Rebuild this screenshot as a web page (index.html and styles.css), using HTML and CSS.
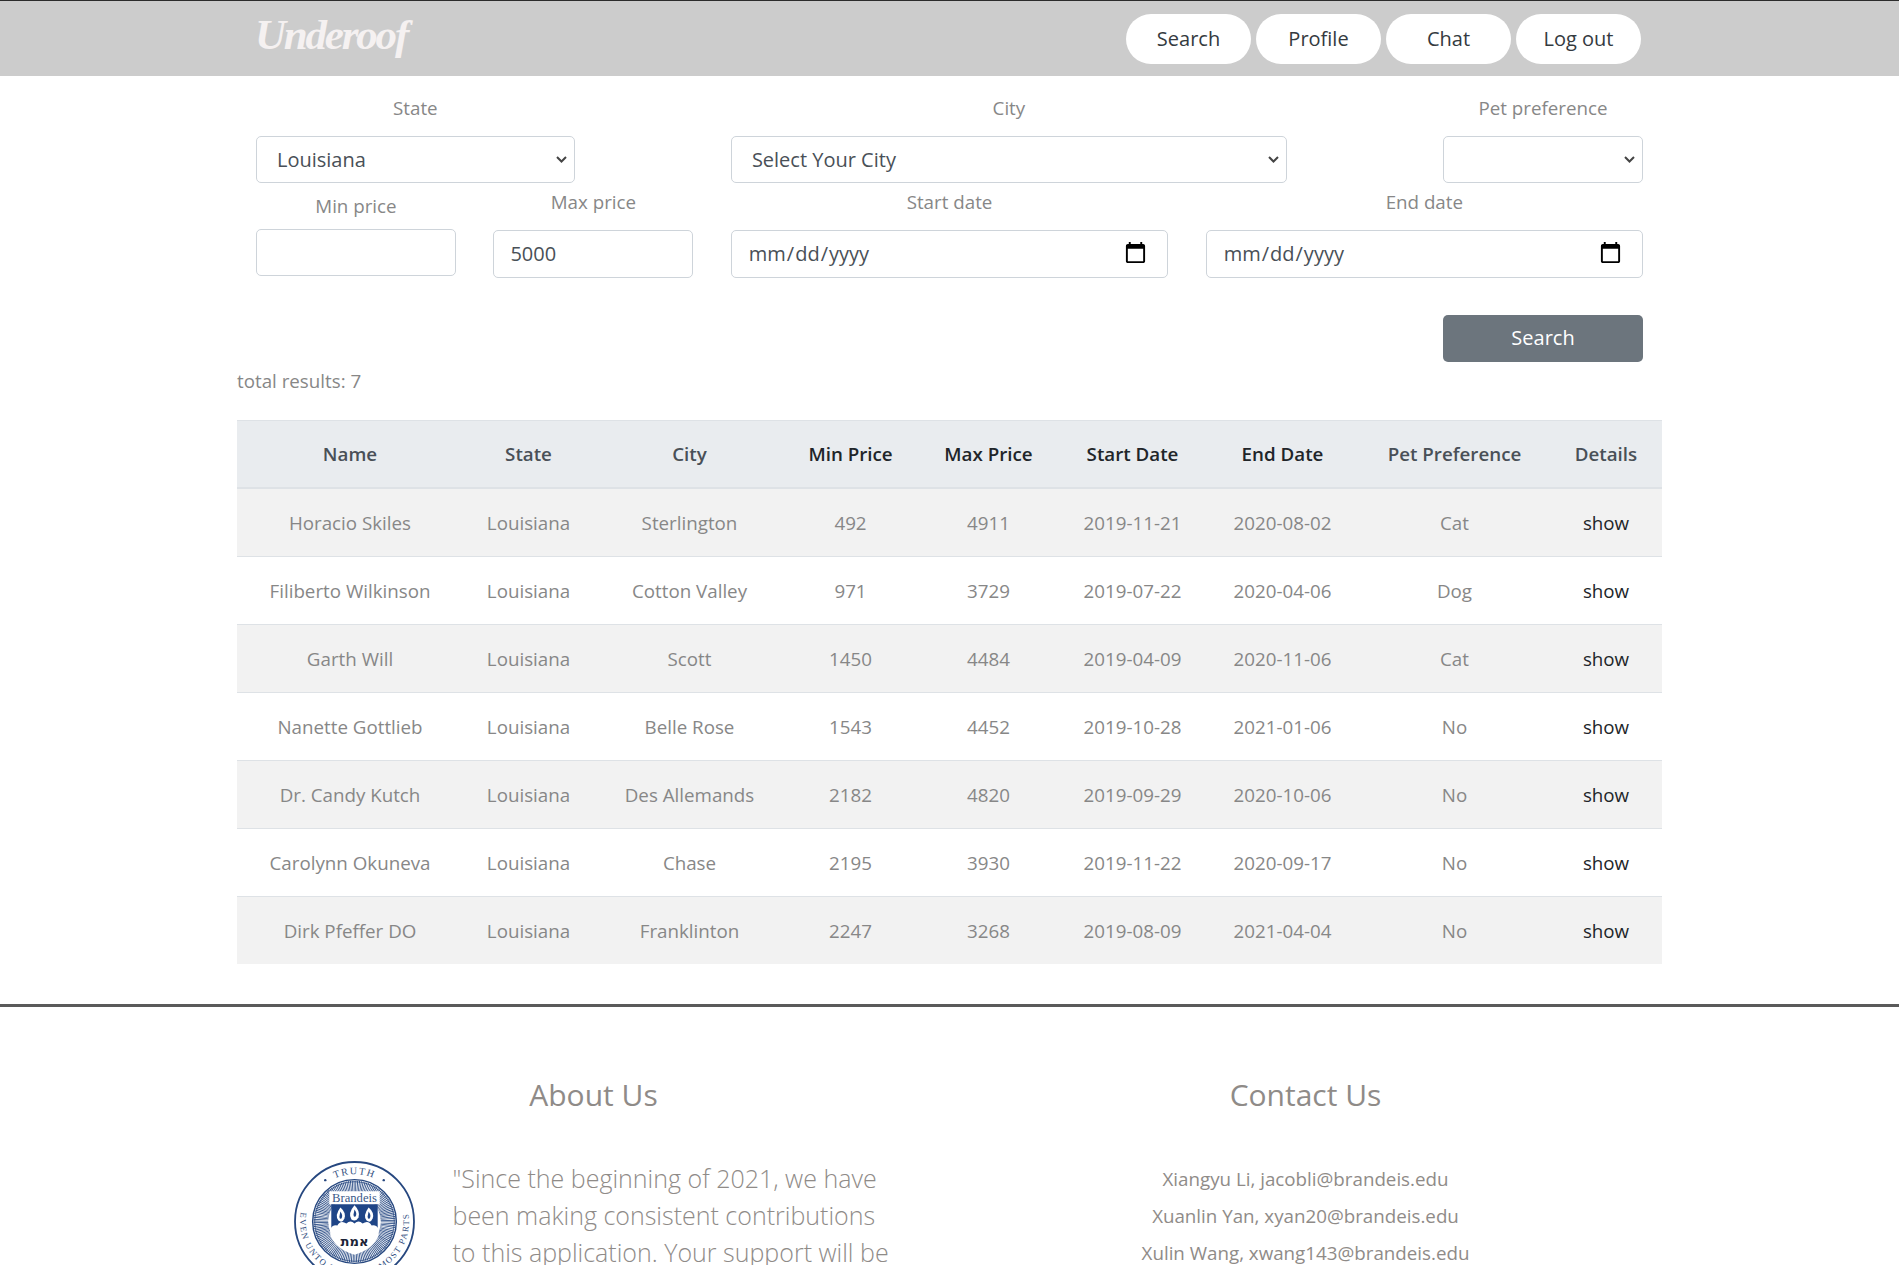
FILE: index.html
```html
<!DOCTYPE html>
<html lang="en">
<head>
<meta charset="utf-8">
<title>Underoof</title>
<link rel="stylesheet" href="styles.css">
</head>
<body>
<header class="topbar">
  <div class="topbar-inner">
    <a class="logo">Underoof</a>
    <nav class="nav">
      <a class="nav-btn">Search</a>
      <a class="nav-btn">Profile</a>
      <a class="nav-btn">Chat</a>
      <a class="nav-btn">Log out</a>
    </nav>
  </div>
</header>
<main class="container">
  <form class="filters">
    <div class="field span-3"><label>State</label><select class="control picker"><option>Louisiana</option></select></div>
    <div class="field span-5 offset-city"><label>City</label><select class="control picker"><option>Select Your City</option></select></div>
    <div class="field span-2 offset-pet"><label>Pet preference</label><select class="control picker"><option></option></select></div>
    <div class="field span-2 field-min"><label>Min price</label><input class="control text-input" type="text"></div>
    <div class="field span-2 field-low"><label>Max price</label><input class="control text-input tall" type="text" value="5000"></div>
    <div class="field span-4 field-low"><label>Start date</label><input class="control text-input tall" type="date"></div>
    <div class="field span-4 field-low"><label>End date</label><input class="control text-input tall" type="date"></div>
    <button class="submit" type="button">Search</button>
  </form>
  <p class="total">total results: 7</p>
  <table class="results">
    <colgroup>
      <col class="c-name"><col class="c-state"><col class="c-city"><col class="c-min"><col class="c-max"><col class="c-start"><col class="c-end"><col class="c-pet"><col class="c-details">
    </colgroup>
    <thead>
      <tr><th>Name</th><th>State</th><th>City</th><th class="dark">Min Price</th><th class="dark">Max Price</th><th class="dark">Start Date</th><th class="dark">End Date</th><th>Pet Preference</th><th>Details</th></tr>
    </thead>
    <tbody>
      <tr><td>Horacio Skiles</td><td>Louisiana</td><td>Sterlington</td><td>492</td><td>4911</td><td>2019-11-21</td><td>2020-08-02</td><td>Cat</td><td><a class="show">show</a></td></tr>
      <tr><td>Filiberto Wilkinson</td><td>Louisiana</td><td>Cotton Valley</td><td>971</td><td>3729</td><td>2019-07-22</td><td>2020-04-06</td><td>Dog</td><td><a class="show">show</a></td></tr>
      <tr><td>Garth Will</td><td>Louisiana</td><td>Scott</td><td>1450</td><td>4484</td><td>2019-04-09</td><td>2020-11-06</td><td>Cat</td><td><a class="show">show</a></td></tr>
      <tr><td>Nanette Gottlieb</td><td>Louisiana</td><td>Belle Rose</td><td>1543</td><td>4452</td><td>2019-10-28</td><td>2021-01-06</td><td>No</td><td><a class="show">show</a></td></tr>
      <tr><td>Dr. Candy Kutch</td><td>Louisiana</td><td>Des Allemands</td><td>2182</td><td>4820</td><td>2019-09-29</td><td>2020-10-06</td><td>No</td><td><a class="show">show</a></td></tr>
      <tr><td>Carolynn Okuneva</td><td>Louisiana</td><td>Chase</td><td>2195</td><td>3930</td><td>2019-11-22</td><td>2020-09-17</td><td>No</td><td><a class="show">show</a></td></tr>
      <tr class="last-row"><td>Dirk Pfeffer DO</td><td>Louisiana</td><td>Franklinton</td><td>2247</td><td>3268</td><td>2019-08-09</td><td>2021-04-04</td><td>No</td><td><a class="show">show</a></td></tr>
    </tbody>
  </table>
</main>
<footer class="footer">
  <section class="about">
    <h2>About Us</h2>
    <div class="about-body">
      <svg class="seal" viewBox="0 0 120 120" xmlns="http://www.w3.org/2000/svg">
        <defs>
          <path id="arcTop" d="M 13 60 A 47 47 0 0 1 107 60"/>
          <path id="arcBottom" d="M 13.2 33 A 54 54 0 1 0 106.8 33"/>
        </defs>
        <circle cx="60" cy="60" r="59" fill="#fff" stroke="#26477f" stroke-width="1.8"/>
        <circle cx="60" cy="60" r="41.5" fill="#fff" stroke="#26477f" stroke-width="1.4"/>
        <circle cx="60" cy="60" r="33" fill="none" stroke="#2f5088" stroke-width="15" stroke-dasharray="0.8 0.7"/>
        <circle cx="60" cy="60" r="39.5" fill="none" stroke="#26477f" stroke-width="0.7"/>
        <circle cx="60" cy="60" r="26" fill="#fff"/>
        <rect x="35" y="30" width="50" height="13" fill="#fff"/>
        <circle cx="31" cy="19" r="1.2" fill="#26477f"/>
        <circle cx="89" cy="19" r="1.2" fill="#26477f"/>
        <g class="seal-serif">
          <text font-size="10" fill="#33507f" letter-spacing="1.4"><textPath href="#arcTop" startOffset="50%" text-anchor="middle">TRUTH</textPath></text>
          <text font-size="8.6" fill="#33507f" letter-spacing="1.5"><textPath href="#arcBottom" startOffset="50%" text-anchor="middle">EVEN UNTO ITS INNERMOST PARTS</textPath></text>
          <text x="60" y="41" font-size="12.5" fill="#3a5888" text-anchor="middle">Brandeis</text>
        </g>
        <path d="M37 43 H83 V68 H37 Z" fill="#1f4587"/>
        <path d="M36 68 Q38 63 43 64 Q46 58 52 62 Q56 58 60 62 Q64 58 68 62 Q74 58 77 64 Q82 63 84 68 V74 Q78 88 60 93 Q42 88 36 74 Z" fill="#fff"/>
        <g fill="#fff">
          <path d="M46 46 Q52 51 50 57 Q48 62 44 59 Q40 54 46 46Z"/>
          <path d="M60 44 Q66 50 64 56 Q61 61 57 58 Q53 52 60 44Z"/>
          <path d="M74 46 Q80 51 78 57 Q76 62 72 59 Q68 54 74 46Z"/>
        </g>
        <g fill="#1f4587">
          <path d="M46 50 Q49 54 47 57 Q45 58 45 55Z"/>
          <path d="M60 48 Q63 52 61 55 Q59 56 59 53Z"/>
          <path d="M74 50 Q77 54 75 57 Q73 58 73 55Z"/>
        </g>
        <text class="seal-hebrew" x="60" y="84" font-size="13" font-weight="700" fill="#1c2438" text-anchor="middle">אמת</text>
      </svg>
      <p class="quote">"Since the beginning of 2021, we have been making consistent contributions to this application. Your support will be</p>
    </div>
  </section>
  <section class="contact">
    <h2>Contact Us</h2>
    <p>Xiangyu Li, jacobli@brandeis.edu</p>
    <p>Xuanlin Yan, xyan20@brandeis.edu</p>
    <p>Xulin Wang, xwang143@brandeis.edu</p>
  </section>
</footer>
</body>
</html>
```
FILE: styles.css
```css
* { box-sizing: border-box; }
html, body { margin: 0; height: 100vh; overflow: hidden; }
body {
  background: #fff;
  color: #878787;
  font-family: "Open Sans", "Noto Sans", sans-serif;
  font-size: 18.75px;
  line-height: 1.5;
}
.topbar {
  height: 76px;
  background: #ccc;
  border-top: 1.5px solid #2b2b2b;
}
.topbar-inner {
  width: 1425px;
  margin: 0 auto;
  padding: 11.5px 21px 0 18px;
  display: flex;
  justify-content: space-between;
  align-items: flex-start;
}
.logo {
  color: #f5f1f1;
  font-family: "Liberation Serif", serif;
  font-style: italic;
  font-weight: 700;
  font-size: 43px;
  line-height: 43px;
  letter-spacing: -2.2px;
}
.nav { display: flex; gap: 5px; margin-top: 1px; }
.nav-btn {
  width: 125px;
  height: 50px;
  border-radius: 25px;
  background: #fff;
  color: #343a40;
  font-size: 20px;
  line-height: 50px;
  text-align: center;
}
.container { width: 1425px; margin: 0 auto; }
.filters {
  display: grid;
  grid-template-columns: repeat(12, 1fr);
  column-gap: 37.5px;
  padding: 18px 19px 0;
}
.field { display: flex; flex-direction: column; text-align: center; }
.field label { line-height: 28px; margin-bottom: 14px; }
.field-min { margin-top: 5px; }
.field-low { margin-top: 5px; }
.field-min label { margin-top: 4px; margin-bottom: 9px; }
.span-3 { grid-column: 1 / span 3; }
.span-5 { grid-column: span 5; }
.span-2 { grid-column: span 2; }
.span-4 { grid-column: span 4; }
.offset-city { grid-column: 4 / span 5; margin-left: 118.75px; margin-right: -118.75px; }
.offset-pet { grid-column: 11 / span 2; }
.control {
  width: 100%;
  height: 47px;
  border: 1.25px solid #ced4da;
  border-radius: 5px;
  background-color: #fff;
  color: #495057;
  font-family: inherit;
  font-size: 20px;
  padding: 0 16px 0 20px;
}
.picker {
  appearance: none;
  background-image: url("data:image/svg+xml,%3Csvg xmlns='http://www.w3.org/2000/svg' viewBox='0 0 11 7'%3E%3Cpath d='M1 1l4.5 4.5L10 1' fill='none' stroke='%23444' stroke-width='2'/%3E%3C/svg%3E");
  background-repeat: no-repeat;
  background-position: right 7px center;
  background-size: 11px 7px;
}
.text-input { padding: 0 16px; }
.tall { height: 48px; padding-bottom: 2px; }
.text-input::-webkit-calendar-picker-indicator {
  width: 25px;
  height: 25px;
  padding: 0;
  margin: 0 3px 0 0;
}
.submit {
  grid-column: 11 / span 2;
  height: 47px;
  margin-top: 37px;
  padding: 0 0 2px;
  border: 0;
  border-radius: 5px;
  background: #6c757d;
  color: #fff;
  font-family: inherit;
  font-size: 20px;
}
.total { margin: 5px 0 24.5px; line-height: 28px; }
.results {
  width: 1425px;
  table-layout: fixed;
  border-collapse: collapse;
  text-align: center;
}
.c-name { width: 224px; } .c-state { width: 133px; } .c-city { width: 189px; }
.c-min { width: 133px; } .c-max { width: 143px; } .c-start { width: 145px; }
.c-end { width: 155px; } .c-pet { width: 189px; } .c-details { width: 114px; }
.results th {
  height: 68px;
  padding: 0 0 0 2px;
  background: #e9ecef;
  color: #495057;
  font-weight: 600;
  border-top: 1.25px solid #dee2e6;
  border-bottom: 2px solid #dee2e6;
}
.results th.dark { color: #212529; }
.results td { height: 68px; padding: 2px 0 0 2px; border-bottom: 1.25px solid #dee2e6; }
.results tbody tr:nth-child(odd) { background: #f2f2f2; }
.results .last-row td { border-bottom: 0; }
.show { color: #212529; }
.footer {
  margin-top: 40px;
  border-top: 3px solid #5a5a5a;
  padding-top: 65px;
  display: grid;
  grid-template-columns: 712px 712px;
  justify-content: center;
}
.footer h2 {
  margin: 0;
  font-size: 30px;
  font-weight: 400;
  line-height: 45px;
  text-align: center;
  color: #8f8b88;
}
.about { padding-left: 56px; }
.about h2 { width: 600px; }
.about-body { display: flex; gap: 38px; margin-top: 43px; }
.seal { width: 121px; height: 121px; flex: none; margin-top: 1px; }
.seal-serif { font-family: "Liberation Serif", serif; }
.seal-hebrew { font-family: "DejaVu Sans", sans-serif; }
.quote {
  margin: 0;
  width: 445px;
  font-size: 25px;
  font-weight: 300;
  line-height: 37px;
  color: #8f8b88;
}
.contact { text-align: center; }
.contact h2 { margin-bottom: 43px; }
.contact p { margin: 0; font-size: 18.75px; line-height: 37px; color: #8f8b88; }
```
